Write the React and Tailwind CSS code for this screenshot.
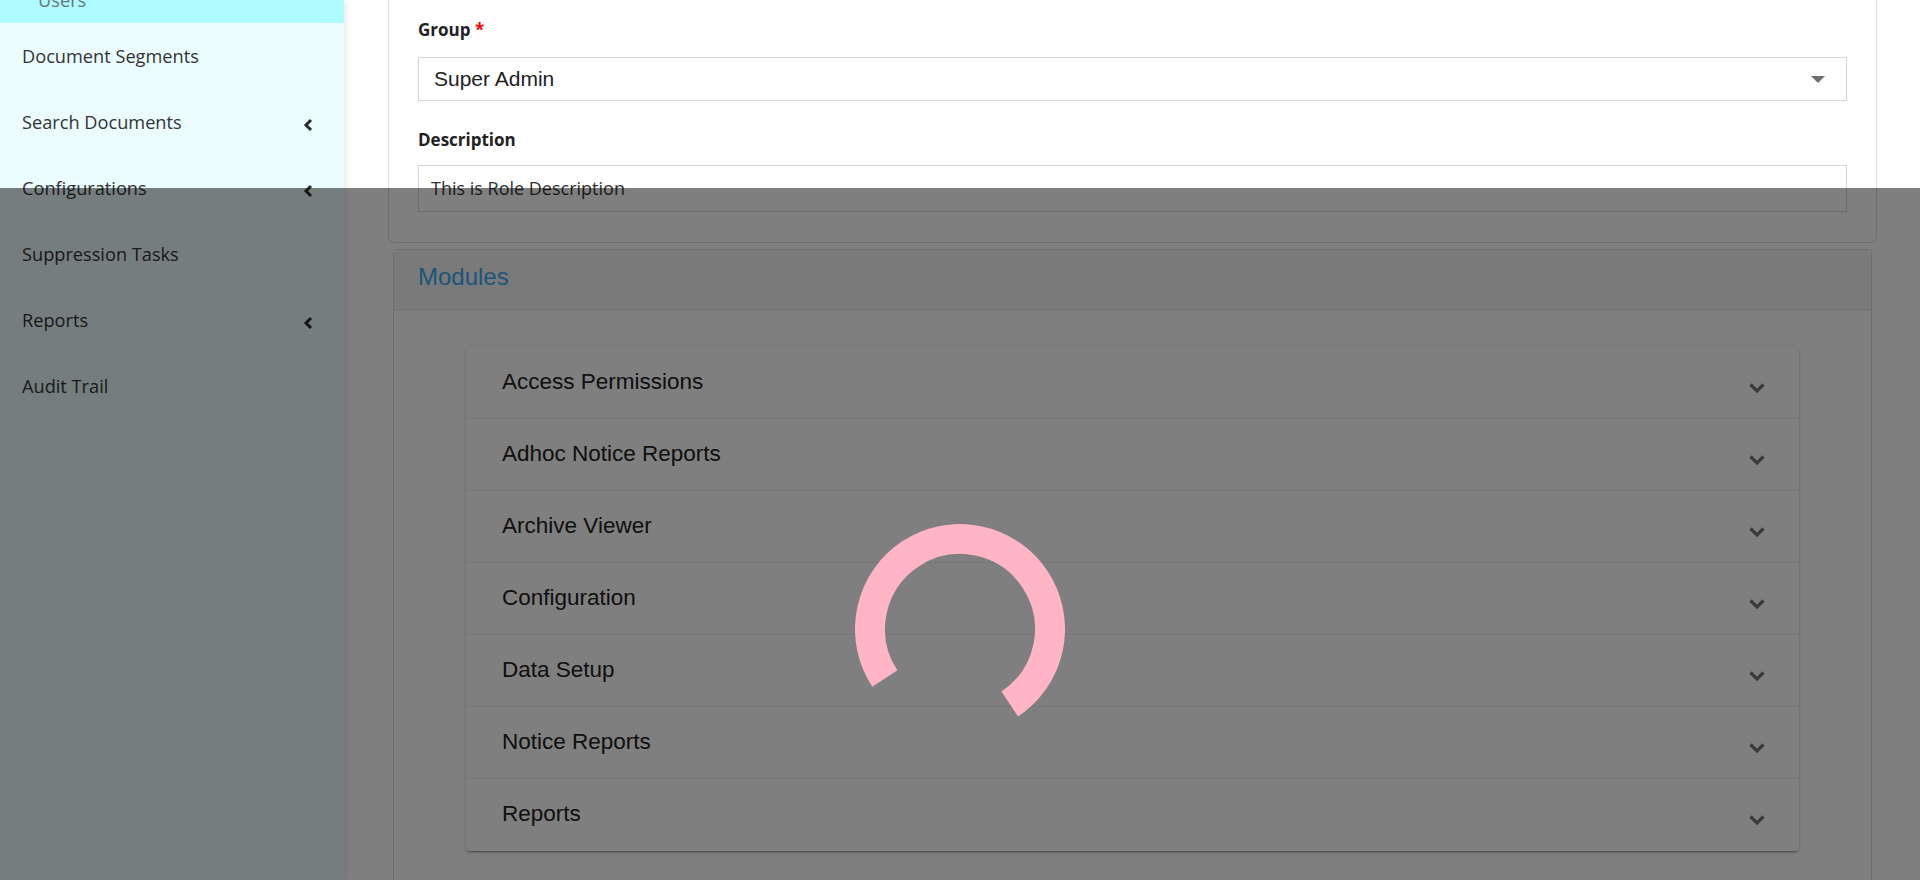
import React from 'react';

const menu = [
  { label: 'Document Segments' },
  { label: 'Search Documents', sub: true },
  { label: 'Configurations', sub: true },
  { label: 'Suppression Tasks' },
  { label: 'Reports', sub: true },
  { label: 'Audit Trail' },
];

const modules = [
  'Access Permissions',
  'Adhoc Notice Reports',
  'Archive Viewer',
  'Configuration',
  'Data Setup',
  'Notice Reports',
  'Reports',
];

const AngleLeft = () => (
  <svg width="10" height="14" viewBox="0 0 10 14" className="shrink-0 mt-[3px]">
    <polyline points="8,2 3,7 8,12" fill="none" stroke="#2b2b2b" strokeWidth="3" />
  </svg>
);

const ChevronDown = () => (
  <svg width="16" height="10" viewBox="0 0 16 10" className="shrink-0 mt-[12px]">
    <polyline points="1.5,1.5 8,8 14.5,1.5" fill="none" stroke="#747474" strokeWidth="3.2" />
  </svg>
);

const Sidebar = () => (
  <aside className="relative z-10 w-[344px] shrink-0 bg-[#ebfdff] shadow-[3px_0_6px_rgba(0,0,0,0.07)] font-['Open_Sans',sans-serif] text-[18.2px] text-[#333]">
    {/* active sub item, scrolled partly out of view */}
    <div className="h-[23px] overflow-hidden bg-[#aefcff]">
      <div className="mt-[-12px] pl-[38px] leading-[24px] text-[#6b7577]">Users</div>
    </div>
    {menu.map((m) => (
      <div key={m.label} className="flex h-[66px] items-center justify-between pt-[2px] pl-[22px] pr-[31px]">
        <span>{m.label}</span>
        {m.sub && <AngleLeft />}
      </div>
    ))}
  </aside>
);

const RoleForm = () => (
  <div className="ml-[44px] mr-[43px] rounded-b-[6px] border-x border-b border-[#dcdcdc] bg-white px-[29px] pt-[18px] pb-[30px]">
    <label className="block font-['Open_Sans',sans-serif] text-[17px] font-bold leading-[24px] text-[#222]">
      Group <span className="text-[#f00]">*</span>
    </label>
    <div className="mt-[15px] flex h-[44px] items-center justify-between border border-[#d2d4de] pl-[15px] pr-[21px] font-['Liberation_Sans',Arial,sans-serif] text-[21px] text-[#222]">
      <span>Super Admin</span>
      <svg width="14" height="7" viewBox="0 0 14 7">
        <polygon points="0,0 14,0 7,7" fill="#6f6f6f" />
      </svg>
    </div>
    <label className="mt-[27px] block font-['Open_Sans',sans-serif] text-[17px] font-bold leading-[24px] text-[#222]">
      Description
    </label>
    <div className="mt-[13px] flex h-[47px] items-center border border-[#d2d4de] pl-[12px] font-['Open_Sans',sans-serif] text-[18px] text-[#333]">
      This is Role Description
    </div>
  </div>
);

const Modules = () => (
  <div className="mt-[6px] ml-[49px] mr-[48px] rounded-t-[4px] border border-[#dcdcdc] bg-white pb-[40px]">
    <div className="flex h-[60px] items-center border-b border-[#dcdcdc] bg-[#f5f5f5] pb-[5px] pl-[24px] font-['Liberation_Sans',Arial,sans-serif] text-[24px] text-[#38aaf2]">
      Modules
    </div>
    <div className="mx-[72px] mt-[37px] overflow-hidden rounded-[4px] bg-white shadow-[0_3px_1px_-2px_rgba(0,0,0,0.2),0_2px_2px_0_rgba(0,0,0,0.14),0_1px_5px_0_rgba(0,0,0,0.12)]">
      {modules.map((m, i) => (
        <div
          key={m}
          className={`flex h-[72px] items-center justify-between pb-[2px] pl-[36px] pr-[34px] font-['Liberation_Sans',Arial,sans-serif] text-[22.5px] text-[#212121] ${i < modules.length - 1 ? 'border-b border-[#ececec]' : ''}`}
        >
          <span>{m}</span>
          <ChevronDown />
        </div>
      ))}
    </div>
  </div>
);

const Spinner = () => {
  const r = 90;
  const c = 2 * Math.PI * r;
  const arc = (269.4 / 360) * c;
  return (
    <svg width="210" height="210" viewBox="0 0 210 210" className="absolute left-[855px] top-[524px] z-30">
      <circle
        cx="105"
        cy="105"
        r={r}
        fill="none"
        stroke="#ffb5c6"
        strokeWidth="30"
        strokeDasharray={`${arc} ${c}`}
        transform="rotate(146.6 105 105)"
      />
    </svg>
  );
};

export default function App() {
  return (
    <div className="relative flex h-[880px] w-[1920px] overflow-hidden bg-white">
      <Sidebar />
      <main className="flex-1">
        <RoleForm />
        <Modules />
      </main>
      <div className="absolute inset-x-0 top-[188px] bottom-0 z-20 bg-black/50" />
      <Spinner />
    </div>
  );
}
